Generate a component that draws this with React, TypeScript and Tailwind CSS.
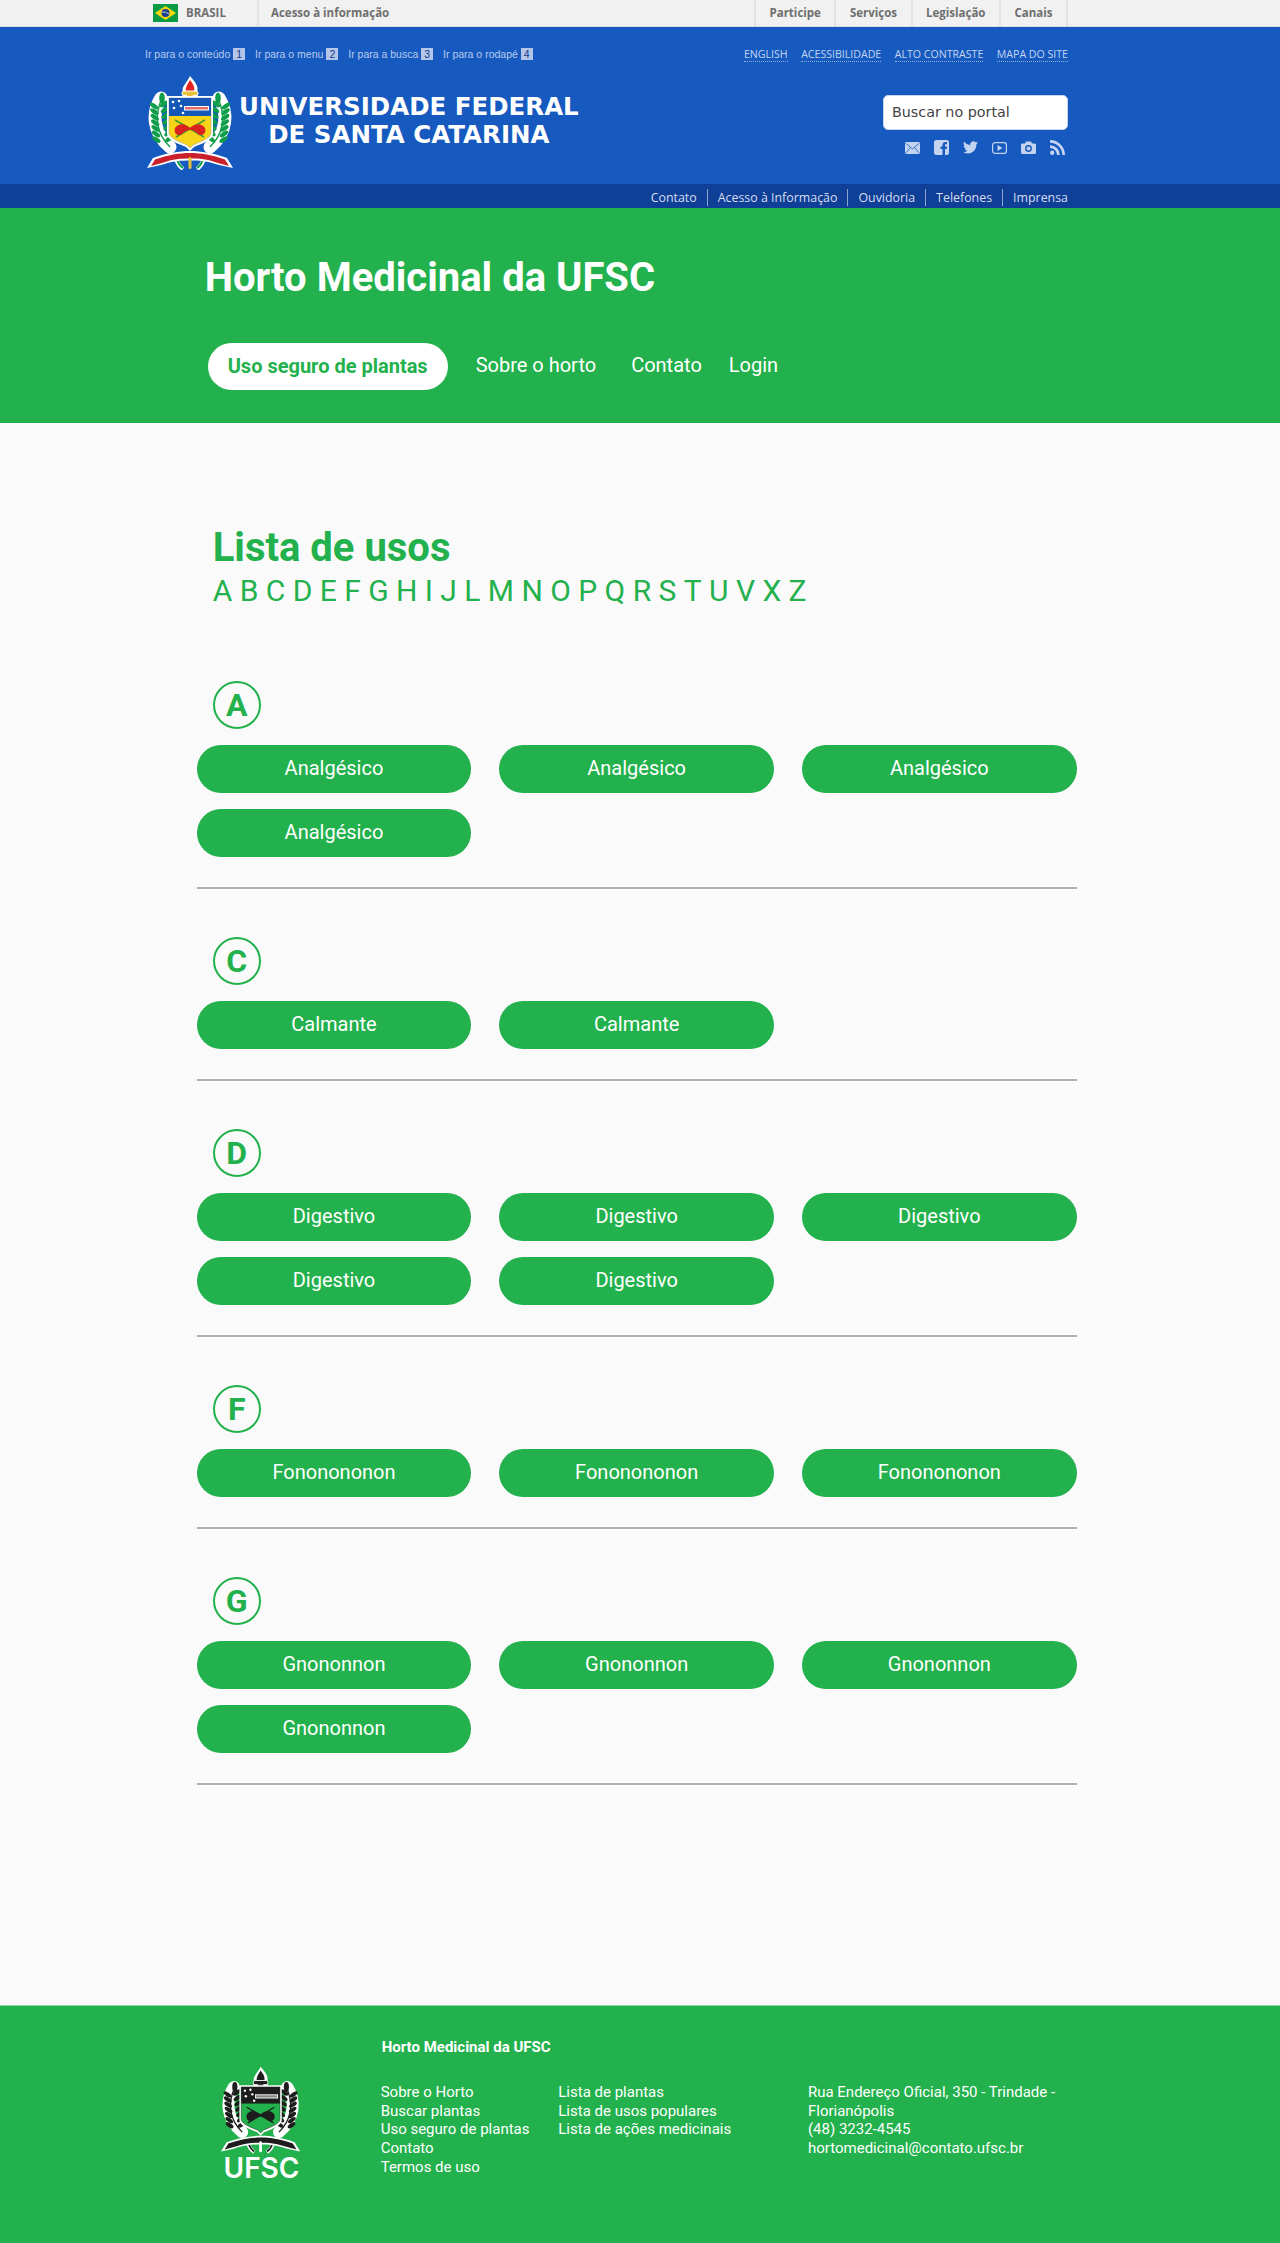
const roboto = "font-['Roboto',sans-serif]";

const letters = "A B C D E F G H I J L M N O P Q R S T U V X Z".split(" ");

const sections = [
  { letter: "A", label: "Analgésico", count: 4 },
  { letter: "C", label: "Calmante", count: 2 },
  { letter: "D", label: "Digestivo", count: 5 },
  { letter: "F", label: "Fononononon", count: 3 },
  { letter: "G", label: "Gnononnon", count: 4 },
];

function BrazilFlag() {
  return (
    <svg width="25" height="18" viewBox="0 0 25 18">
      <rect width="25" height="18" fill="#0a9a44" />
      <polygon points="12.5,2 23,9 12.5,16 2,9" fill="#f5d90a" />
      <circle cx="12.5" cy="9" r="4" fill="#1c3f8f" />
      <path d="M8.7 8 Q12.5 7.5 16.3 10" stroke="#fff" strokeWidth="0.7" fill="none" />
    </svg>
  );
}

function Crest({ mono = false }: { mono?: boolean }) {
  const leaf = mono ? "#1d1d1d" : "#0f9d4a";
  const top = mono ? "#1d1d1d" : "#1658b8";
  const shield = mono ? "#22b14c" : "#f7d417";
  const knot = mono ? "#1d1d1d" : "#d8231f";
  const flame = mono ? "#1d1d1d" : "#e2231f";
  const ribbon = mono ? "#1d1d1d" : "#c9202a";
  const gold = mono ? "#1d1d1d" : "#e8c23a";
  const leaves = [0, 1, 2, 3, 4, 5, 6];
  return (
    <svg viewBox="1 0 88 94" className="h-full w-full">
      {/* torch */}
      <path d="M44 0 C50 7 53 11 51 16 L52 21 H36 L37 16 C35 11 40 8 44 0Z" fill="#fff" />
      <path d="M44 4 C48 9 49 12 48 16 H40 C39 12 41 9 44 4Z" fill={flame} />
      <rect x="36" y="15" width="16" height="4.500" rx="2" fill={gold} stroke="#fff" strokeWidth="1" />
      <rect x="41" y="19" width="6" height="3" fill={gold} />
      {/* wreath */}
      {[0, 1].map((side) => (
        <g key={side} transform={side ? "matrix(-1 0 0 1 88 0)" : undefined}>
          <path d="M15 22 C6 36 6 56 24 71" fill="none" stroke="#fff" strokeWidth="13" strokeLinecap="round" />
          <path d="M16 22 C9 38 9 56 24 71" fill="none" stroke={leaf} strokeWidth="1.400" />
          <ellipse cx="16" cy="22" rx="2.800" ry="5.500" fill={leaf} />
          {leaves.map((i) => {
            const xa = 8 + i * 0.4;
            const ya = 30 + i * 5.6;
            const xb = 18 + i * 0.9;
            const yb = 28 + i * 5.8;
            return (
              <g key={i}>
                <ellipse cx={xa} cy={ya} rx="4.800" ry="2.200" fill={leaf} transform={`rotate(35 ${xa} ${ya})`} />
                <ellipse cx={xb} cy={yb} rx="4.800" ry="2.200" fill={leaf} transform={`rotate(-35 ${xb} ${yb})`} />
              </g>
            );
          })}
        </g>
      ))}
      {/* shield */}
      <path d="M21 20 H67 V58 C67 64 55 68 48 71 L44 75 L40 71 C33 68 21 64 21 58Z" fill="#fff" />
      <path d="M23 22 H65 V57 C65 62 54 66 47 69 L44 72 L41 69 C34 66 23 62 23 57Z" fill={shield} stroke={mono ? "#1d1d1d" : "#999"} strokeWidth="0.5" />
      <rect x="23" y="22" width="42" height="18" fill={top} />
      <rect x="38" y="30" width="25" height="4.500" fill="#fff" />
      <rect x="39" y="31" width="23" height="2.500" fill={mono ? "#888" : "#e36d6d"} />
      {[[27, 26], [33, 25], [28, 32], [35, 30], [37, 37]].map(([x, y]) => (
        <circle key={x * y} cx={x} cy={y} r="1.300" fill="#fff" />
      ))}
      <path d="M29 44 L58 61 M59 44 L30 61" stroke={mono ? "#1d1d1d" : "#3f9b35"} strokeWidth="1.500" />
      <path d="M29 52 C33 46 40 48 44 52 C48 48 55 46 59 52 C61 59 54 61 51 57 C49 55 47 54 44 54 C41 54 39 55 37 57 C34 61 27 59 29 52Z" fill={knot} />
      {/* ribbon */}
      <path d="M30 82 C31 87 33 90 37 93 M58 82 C57 87 55 90 51 93" stroke="#fff" strokeWidth="4" fill="none" />
      <path d="M31 83 C32 87 34 90 37 92 M57 83 C56 87 54 90 51 92" stroke={leaf} strokeWidth="2" fill="none" />
      <path d="M1 92 L7 82 C21 77 33 75 44 75 C55 75 67 77 81 82 L87 92 L73 89 C61 85 53 84.500 44 84.500 C35 84.500 27 85 15 89Z" fill="#fff" />
      <path d="M5 90 L9 83.500 C22 79 33 77 44 77 C55 77 66 79 79 83.500 L83 90 L72 87 C61 83 53 82.500 44 82.500 C35 82.500 27 83 16 87Z" fill={ribbon} />
      <rect x="42.500" y="81" width="3" height="12" rx="1.500" fill={mono ? "#fff" : "#e8c23a"} />
    </svg>
  );
}

function SocialIcons() {
  return (
    <div className="flex items-center justify-end gap-[14px] pr-[3px] text-[#c4d4f0]">
      <svg width="15" height="12" viewBox="0 0 15 12">
        <rect width="15" height="12" rx="1" fill="currentColor" />
        <path d="M0.5 1 L7.5 7 L14.5 1 M0.5 11.5 L5.5 5.5 M14.5 11.5 L9.5 5.5" stroke="#165abf" strokeWidth="0.8" fill="none" />
      </svg>
      <svg width="15" height="15" viewBox="0 0 15 15">
        <rect width="15" height="15" rx="2.5" fill="currentColor" />
        <path d="M8.5 15 V9 H6.6 V6.6 H8.5 V5 C8.5 3 9.7 2 11.4 2 H13 V4.3 H12 C11.2 4.3 11 4.7 11 5.3 V6.6 H13 L12.7 9 H11 V15Z" fill="#165abf" />
      </svg>
      <svg width="15" height="13" viewBox="0 0 24 20">
        <path
          d="M24 2.4a9.6 9.6 0 0 1-2.8.8A5 5 0 0 0 23.3.5a9.800 9.800 0 0 1-3.100 1.200 4.900 4.900 0 0 0-8.400 4.500A14 14 0 0 1 1.700.9a4.900 4.900 0 0 0 1.500 6.600 4.900 4.900 0 0 1-2.200-.6v.1a4.900 4.900 0 0 0 3.900 4.800 4.900 4.900 0 0 1-2.200.1 4.900 4.900 0 0 0 4.600 3.400A9.900 9.900 0 0 1 0 17.300 14 14 0 0 0 7.500 19.500c9 0 14-7.500 14-14v-.6A10 10 0 0 0 24 2.400z"
          fill="currentColor"
        />
      </svg>
      <svg width="15" height="12" viewBox="0 0 15 12">
        <rect x="0.6" y="0.6" width="13.800" height="10.800" rx="2.500" fill="none" stroke="currentColor" strokeWidth="1.200" />
        <polygon points="5.500,3 10.500,6 5.500,9" fill="currentColor" />
      </svg>
      <svg width="15" height="13" viewBox="0 0 15 13">
        <path d="M1.500 2.500 H4 L5 .5 H10 L11 2.500 H13.500 A1.500 1.500 0 0 1 15 4 V11.500 A1.500 1.500 0 0 1 13.500 13 H1.500 A1.500 1.500 0 0 1 0 11.500 V4 A1.500 1.500 0 0 1 1.500 2.500Z" fill="currentColor" />
        <circle cx="7.500" cy="7.500" r="3.400" fill="#165abf" />
        <circle cx="7.500" cy="7.500" r="2" fill="currentColor" />
      </svg>
      <svg width="15" height="15" viewBox="0 0 15 15">
        <circle cx="2.200" cy="12.800" r="2.200" fill="currentColor" />
        <path d="M0 5.200 A9.800 9.800 0 0 1 9.800 15 H7 A7 7 0 0 0 0 8Z" fill="currentColor" />
        <path d="M0 0 A15 15 0 0 1 15 15 H12.300 A12.300 12.300 0 0 0 0 2.700Z" fill="currentColor" />
      </svg>
    </div>
  );
}

function GovBar() {
  const items = ["Participe", "Serviços", "Legislação", "Canais"];
  return (
    <div className="h-[27px] border-b border-[#dcdcdc] bg-[#f1f1f1] font-['Open_Sans',sans-serif] text-[11.500px] font-bold text-[#6f6f6f]">
      <div className="ml-[145px] flex h-[26px] w-[923px] items-center">
        <div className="ml-[8px] flex w-[104px] items-center gap-2">
          <BrazilFlag />
          <span>BRASIL</span>
        </div>
        <div className="flex h-full items-center border-l-2 border-[#e2e2e2] pl-[12px]">Acesso à informação</div>
        <div className="ml-auto flex h-full">
          {items.map((item) => (
            <div key={item} className="flex h-full items-center border-l-2 border-[#e2e2e2] px-[13.500px]">
              {item}
            </div>
          ))}
          <div className="border-l-2 border-[#e2e2e2]" />
        </div>
      </div>
    </div>
  );
}

function Shortcut({ label, n }: { label: string; n: number }) {
  return (
    <span className="flex items-center gap-[3px]">
      {label}
      <span className="bg-[#b3c6ea] px-[3px] text-[10.500px] leading-[12px] text-[#123b86]">{n}</span>
    </span>
  );
}

function BlueHeader() {
  return (
    <div className="h-[157px] bg-[#165abf]">
      <div className="ml-[145px] w-[923px]">
        <div className="flex h-[49px] items-start justify-between pt-[20px]">
          <div className="flex gap-[10px] font-['Liberation_Sans',sans-serif] text-[10.500px] leading-[14px] text-[#b9cbee]">
            <Shortcut label="Ir para o conteúdo" n={1} />
            <Shortcut label="Ir para o menu" n={2} />
            <Shortcut label="Ir para a busca" n={3} />
            <Shortcut label="Ir para o rodapé" n={4} />
          </div>
          <div className="flex gap-[13.500px] font-['Open_Sans',sans-serif] text-[10.600px] leading-[14px] text-[#c4d4f0]">
            {["ENGLISH", "ACESSIBILIDADE", "ALTO CONTRASTE", "MAPA DO SITE"].map((t) => (
              <span key={t} className="border-b border-dotted border-[#8fabdf]">
                {t}
              </span>
            ))}
          </div>
        </div>
        <div className="flex items-start justify-between">
          <div className="flex items-start">
            <div className="ml-[2px] h-[94px] w-[88px]">
              <Crest />
            </div>
            <div className="ml-[4px] mt-[17px] text-center font-['DejaVu_Sans',sans-serif] text-[24.500px] font-bold leading-[28px] text-white">
              <div>UNIVERSIDADE FEDERAL</div>
              <div>DE SANTA CATARINA</div>
            </div>
          </div>
          <div className="mt-[19px] w-[185px]">
            <div className="flex h-[35px] items-center rounded-[5px] border border-[#c7d3ea] bg-white pl-[8px] font-['DejaVu_Sans',sans-serif] text-[14.300px] text-[#444]">
              Buscar no portal
            </div>
            <div className="mt-[10px]">
              <SocialIcons />
            </div>
          </div>
        </div>
      </div>
    </div>
  );
}

function DarkBar() {
  const links = ["Contato", "Acesso à Informação", "Ouvidoria", "Telefones", "Imprensa"];
  return (
    <div className="h-[24px] bg-[#0f3f97]">
      <div className="ml-[145px] flex h-[22px] w-[923px] items-end justify-end font-['Open_Sans',sans-serif] text-[12.400px] leading-[17px] text-[#d5def0]">
        {links.map((l, i) => (
          <span key={l} className={i === 0 ? "pr-[10px]" : i === links.length - 1 ? "border-l border-[#8fa5d0] pl-[10px]" : "border-l border-[#8fa5d0] px-[10px]"}>
            {l}
          </span>
        ))}
      </div>
    </div>
  );
}

function SiteHeader() {
  return (
    <header className={`h-[215px] bg-[#22b14c] text-white ${roboto}`}>
      <div className="ml-[196.670px] w-[880px]">
        <h1 className="pl-[8px] pt-[45px] text-[40px] font-bold leading-[50px]">Horto Medicinal da UFSC</h1>
        <nav className="ml-[11px] mt-[40px] flex items-center text-[20px]">
          <a className="flex h-[47px] w-[240px] items-center justify-center rounded-full bg-white pb-[2px] font-bold text-[#22b14c]">Uso seguro de plantas</a>
          <a className="mb-[3px] ml-[28px]">Sobre o horto</a>
          <a className="mb-[3px] ml-[35px]">Contato</a>
          <a className="mb-[3px] ml-[27px]">Login</a>
        </nav>
      </div>
    </header>
  );
}

function Section({ letter, label, count }: { letter: string; label: string; count: number }) {
  return (
    <section className="border-b-2 border-[#b0b0b0] pb-[30px]">
      <div className="ml-[16px] flex h-[48px] w-[48px] items-center justify-center rounded-full border-2 border-[#22b14c] text-[32px] font-bold leading-none text-[#22b14c]">
        {letter}
      </div>
      <div className="mt-[16px] grid grid-cols-3 gap-x-[28px] gap-y-[16px]">
        {Array.from({ length: count }).map((_, i) => (
          <div key={i} className="flex h-[48px] items-center justify-center rounded-[24px] bg-[#22b14c] pb-[2px] text-[20px] text-white">
            {label}
          </div>
        ))}
      </div>
    </section>
  );
}

function Footer() {
  return (
    <footer className={`h-[238px] border-t border-[#8fd4a3] bg-[#22b14c] text-white ${roboto}`}>
      <div className="ml-[196.670px] flex w-[880px]">
        <div className="ml-[24.330px] mt-[60px] w-[81px]">
          <div className="h-[88px] w-[81px]">
            <Crest mono />
          </div>
          <div className="mt-[2px] whitespace-nowrap text-center font-['Inter',sans-serif] text-[28px] font-semibold leading-[24px]">UFSC</div>
        </div>
        <div className="ml-[78.700px] pt-[32px] text-[15px] leading-[18.750px]">
          <div className="pl-px font-bold">Horto Medicinal da UFSC</div>
          <div className="mt-[26px] flex">
            <div className="w-[177.600px]">
              <div>Sobre o Horto</div>
              <div>Buscar plantas</div>
              <div>Uso seguro de plantas</div>
              <div>Contato</div>
              <div>Termos de uso</div>
            </div>
            <div className="w-[249.700px]">
              <div>Lista de plantas</div>
              <div>Lista de usos populares</div>
              <div>Lista de ações medicinais</div>
            </div>
            <div className="w-[270px]">
              <div>Rua Endereço Oficial, 350 - Trindade - Florianópolis</div>
              <div>(48) 3232-4545</div>
              <div>hortomedicinal@contato.ufsc.br</div>
            </div>
          </div>
        </div>
      </div>
    </footer>
  );
}

export default function App() {
  return (
    <div className="min-h-[2243px] bg-[#fafafa]">
      <GovBar />
      <BlueHeader />
      <DarkBar />
      <SiteHeader />
      <main className={`h-[1582px] ${roboto}`}>
        <div className="ml-[196.670px] w-[880px]">
          <div className="pl-[16px] pt-[101px] text-[#22b14c]">
            <h2 className="text-[40px] font-bold leading-[48px]">Lista de usos</h2>
            <div className="flex gap-[7.400px] text-[30px] leading-[38px]">
              {letters.map((l) => (
                <span key={l}>{l}</span>
              ))}
            </div>
          </div>
          <div className="mt-[71px] flex flex-col gap-[48px]">
            {sections.map((s) => (
              <Section key={s.letter} {...s} />
            ))}
          </div>
        </div>
      </main>
      <Footer />
    </div>
  );
}
